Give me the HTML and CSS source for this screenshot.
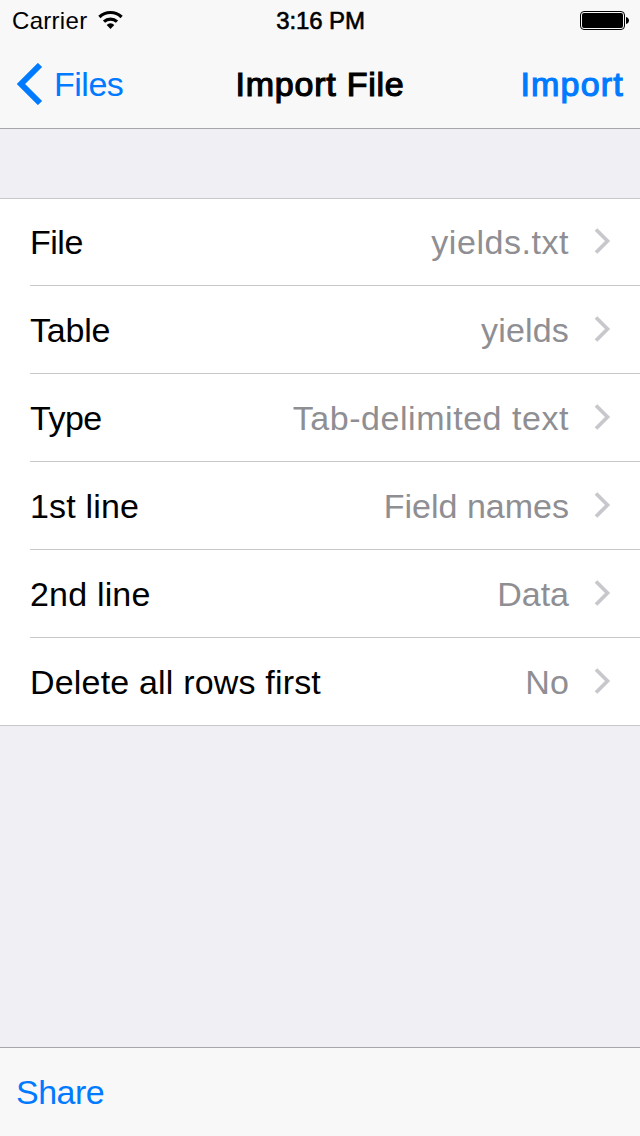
FILE: index.html
```html
<!DOCTYPE html>
<html lang="en">
<head>
<meta charset="utf-8">
<title>Import File</title>
<link rel="stylesheet" href="styles.css">
</head>
<body>
<div class="screen">
  <header class="header">
    <div class="status">
      <div class="carrier"><span class="carrier-name">Carrier</span>
        <svg class="wifi" width="26" height="20" viewBox="0 0 26 20"><path d="M13.500 19l-3.800-4.100a5.400 5.400 0 0 1 7.600 0z"/><path class="arc" d="M7 11.700a9.500 9.500 0 0 1 13 0M2.400 7a16 16 0 0 1 22.200 0"/></svg>
      </div>
      <div class="clock">3:16 PM</div>
      <svg class="battery" width="49" height="20" viewBox="0 0 49 20"><rect x=".5" y=".5" width="44" height="18" rx="3.5" fill="none" stroke="#000"/><rect x="2" y="2" width="41" height="15" rx="2"/><path d="M46 6c4 1 4 6 0 7z"/></svg>
    </div>
    <nav class="nav">
      <a class="back"><svg class="back-icon" width="28" height="42" viewBox="0 0 28 42"><path d="M25 2L6 21l19 19"/></svg><span class="back-text">Files</span></a>
      <h1 class="title">Import File</h1>
      <a class="action">Import</a>
    </nav>
  </header>
  <main class="content">
    <ul class="list">
      <li class="row"><div class="cell"><span class="label tight">File</span><span class="value wide">yields.txt</span><svg class="chevron" width="18" height="28" viewBox="0 0 18 28"><path d="M3 2.500l11.500 11.500-11.500 11.500"/></svg></div></li>
      <li class="row"><div class="cell"><span class="label snug">Table</span><span class="value loose">yields</span><svg class="chevron" width="18" height="28" viewBox="0 0 18 28"><path d="M3 2.500l11.500 11.500-11.500 11.500"/></svg></div></li>
      <li class="row"><div class="cell"><span class="label tight">Type</span><span class="value wide">Tab-delimited text</span><svg class="chevron" width="18" height="28" viewBox="0 0 18 28"><path d="M3 2.500l11.500 11.500-11.500 11.500"/></svg></div></li>
      <li class="row"><div class="cell"><span class="label loose">1st line</span><span class="value">Field names</span><svg class="chevron" width="18" height="28" viewBox="0 0 18 28"><path d="M3 2.500l11.500 11.500-11.500 11.500"/></svg></div></li>
      <li class="row"><div class="cell"><span class="label loose">2nd line</span><span class="value">Data</span><svg class="chevron" width="18" height="28" viewBox="0 0 18 28"><path d="M3 2.500l11.500 11.500-11.500 11.500"/></svg></div></li>
      <li class="row"><div class="cell"><span class="label loose">Delete all rows first</span><span class="value loose">No</span><svg class="chevron" width="18" height="28" viewBox="0 0 18 28"><path d="M3 2.500l11.500 11.500-11.500 11.500"/></svg></div></li>
    </ul>
  </main>
  <footer class="toolbar"><a class="share">Share</a></footer>
</div>
</body>
</html>
```
FILE: styles.css
```css
* { box-sizing: border-box; }
body { margin: 0; font-family: "Liberation Sans", Arial, sans-serif; font-size: 34px; color: #000; }
.screen { width: 640px; height: 1136px; display: flex; flex-direction: column; background: #efeff4; overflow: hidden; }
.header { height: 129px; background: #f8f8f8; border-bottom: 1px solid #a7a7aa; }
.status { height: 40px; display: grid; grid-template-columns: 1fr auto 1fr; align-items: center; padding: 2px 11px 0 12px; font-size: 24px; }
.carrier { display: flex; align-items: center; gap: 10px; letter-spacing: .3px; }
.wifi { margin-bottom: 2px; }
.arc { fill: none; stroke: #000; stroke-width: 3.2; }
.clock { -webkit-text-stroke: .6px #000; letter-spacing: -.1px; }
.battery { justify-self: end; }
.nav { height: 88px; display: grid; grid-template-columns: 1fr auto 1fr; align-items: center; padding: 0 15px; }
.back { display: flex; align-items: center; gap: 11px; color: #007aff; letter-spacing: -.5px; }
.back-icon path { fill: none; stroke: #007aff; stroke-width: 6; }
.title { margin: 0; font-size: 34px; font-weight: 400; letter-spacing: .75px; -webkit-text-stroke: 1.2px #000; }
.action { justify-self: end; margin-right: 1px; color: #007aff; letter-spacing: 1.2px; -webkit-text-stroke: 1.2px #007aff; }
.content { flex: 1; padding-top: 69px; }
.list { margin: 0; padding: 0; list-style: none; background: #fff; border-top: 1px solid #c8c7cc; border-bottom: 1px solid #c8c7cc; }
.row { padding-left: 30px; }
.cell { height: 88px; display: flex; align-items: center; padding-right: 29px; border-bottom: 1px solid #c8c7cc; }
.row:first-child .cell { height: 87px; }
.row:last-child .cell { height: 87px; border-bottom: 0; }
.label, .value { padding-top: 2px; }
.row:first-child .label, .row:first-child .value { padding-top: 1px; }
.value { margin-left: auto; margin-right: 24px; color: #8e8e93; }
.tight { letter-spacing: -.5px; }
.snug { letter-spacing: -.2px; }
.loose { letter-spacing: .18px; }
.wide { letter-spacing: .54px; }
.chevron { margin-bottom: 2px; }
.chevron path { fill: none; stroke: #c7c7cc; stroke-width: 3.7; }
.toolbar { height: 89px; display: flex; align-items: center; padding-left: 16px; background: #f8f8f8; border-top: 1px solid #a7a7aa; color: #007aff; letter-spacing: -.5px; }
```
